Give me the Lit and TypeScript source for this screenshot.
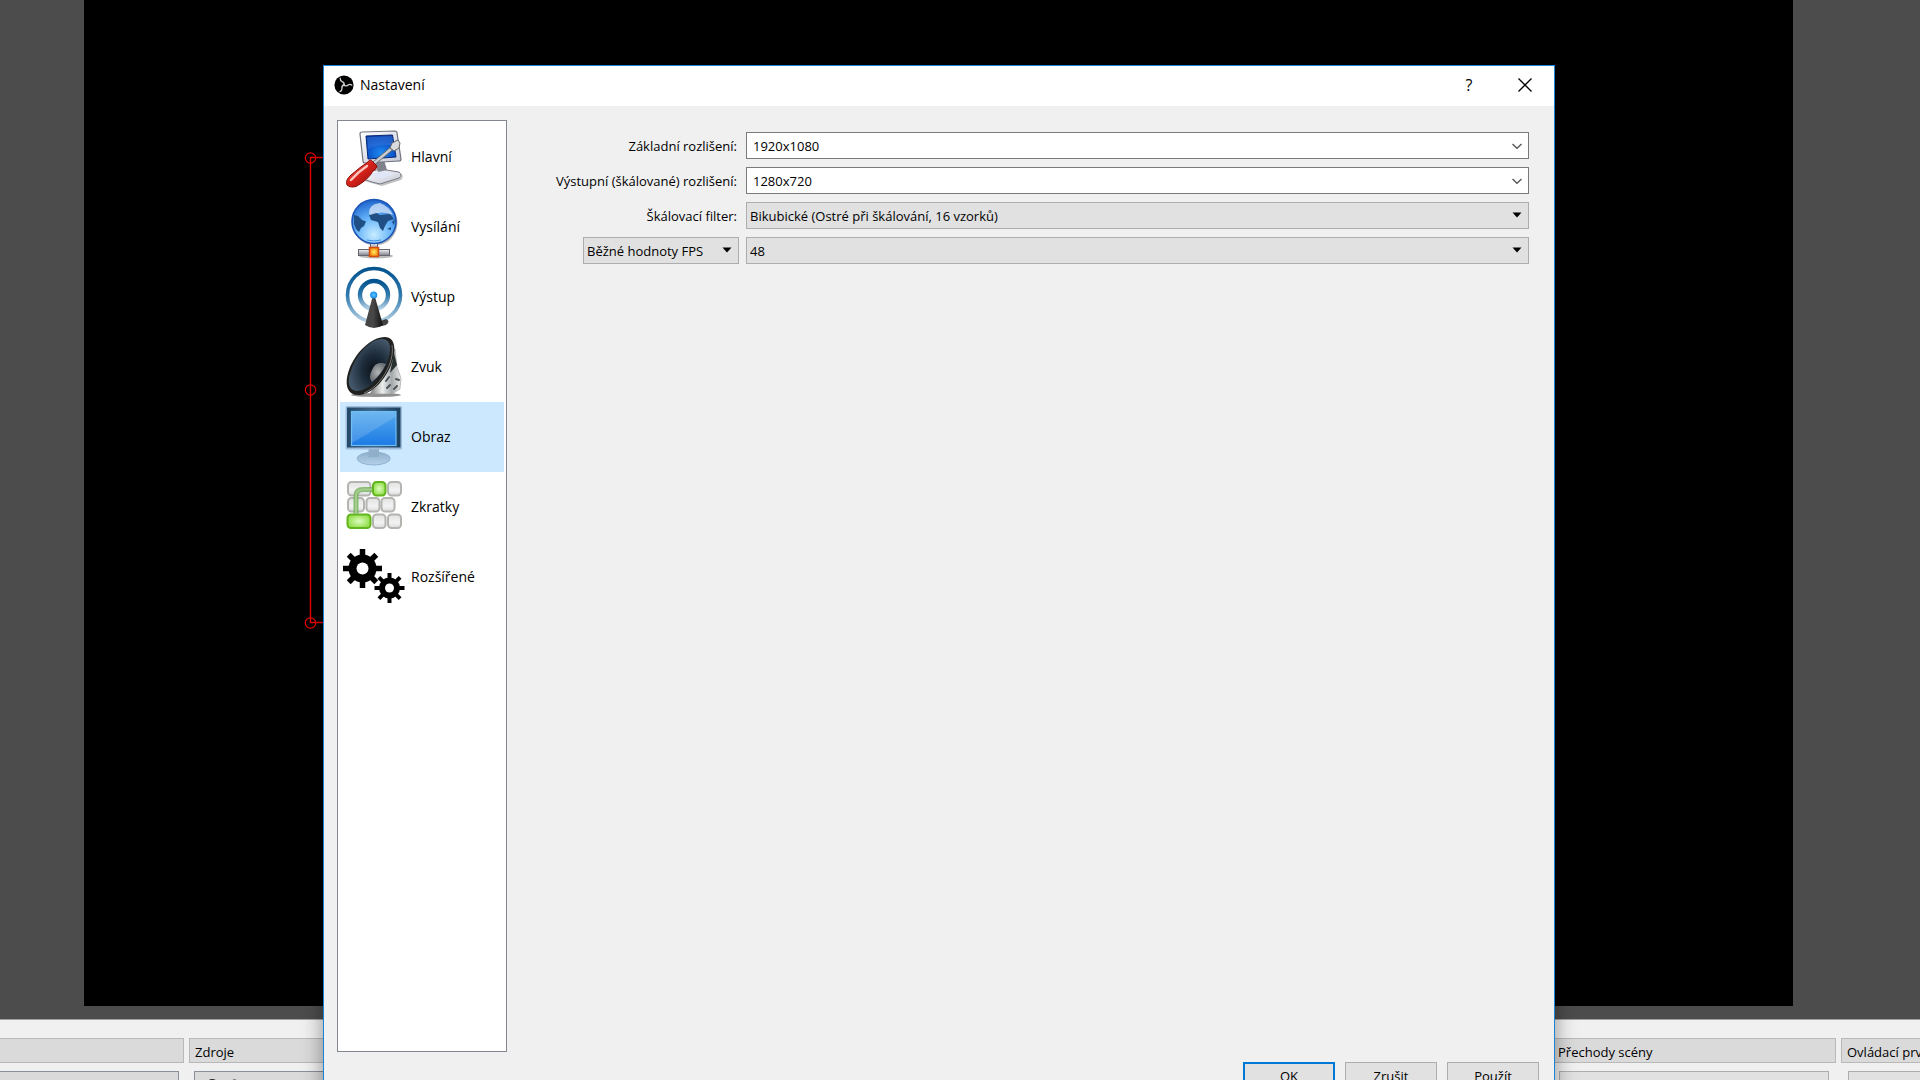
import { LitElement, html, css, svg } from "lit";
import { customElement, property, state } from "lit/decorators.js";
import { classMap } from "lit/directives/class-map.js";

const gear = (cx: number, cy: number, outer: number, body: number, hole: number, tooth: number) => svg`
  <g transform="translate(${cx} ${cy})">
    ${[0, 45, 90, 135].map(
      (a) => svg`<rect x=${-tooth / 2} y=${-outer} width=${tooth} height=${outer * 2} transform="rotate(${a})"></rect>`
    )}
    <circle r=${body}></circle>
    <circle r=${hole} fill="#fff"></circle>
  </g>`;

const key = (x: number, y: number, w: number, green = false) => svg`
  <rect x=${x} y=${y} width=${w} height="13.5" rx="3.5" stroke-width="2"
    fill=${green ? "url(#keyGreen)" : "url(#keyGrey)"} stroke=${green ? "#62b51c" : "#b4b4b0"}></rect>`;

const ICONS: Record<string, unknown> = {
  general: svg`
    <defs>
      <radialGradient id="scr" cx=".5" cy=".75" r=".8"><stop offset="0" stop-color="#1f8cf0"/><stop offset=".6" stop-color="#0a50c8"/><stop offset="1" stop-color="#06329a"/></radialGradient>
      <linearGradient id="shell" x1="0" y1="0" x2="1" y2="1"><stop offset="0" stop-color="#fff"/><stop offset="1" stop-color="#c4c6d4"/></linearGradient>
      <linearGradient id="grip" x1="0" y1="0" x2="1" y2="1"><stop offset="0" stop-color="#f88"/><stop offset=".45" stop-color="#d8241c"/><stop offset="1" stop-color="#8e0c08"/></linearGradient>
    </defs>
    <path d="M24 50 L40 45 L58 48 Q63 51 59 55 L40 61 L22 56 Z" fill="#999" opacity=".6"/>
    <path d="M23 48 L38 44 L57 47 Q61 50 57 53 L38 59 Q28 57 22 54 Z" fill="url(#shell)" stroke="#777a86"/>
    <path d="M28 50 L39 46 L53 49 L38 54 Z" fill="#dfe6f8"/>
    <path d="M33 36 L42 35 L45 45 L36 47 Z" fill="#80828c"/>
    <path d="M20 7 L53 6 Q55 6 55 8 L59 34 Q59 36 57 36 L23 38 Q21 38 21 36 L18 9 Q18 7 20 7 Z" fill="url(#shell)" stroke="#70737e" stroke-width="1.2"/>
    <path d="M24 11 L50.500 10 L54 32 L26 34 Z" fill="url(#scr)" stroke="#0a2a78"/>
    <path d="M25 12 L50 11 L52 21 Q38 18 26 24 Z" fill="#3a7ce0" opacity=".5"/>
    <path d="M31 39 L49 24" stroke="#666" stroke-width="4"/>
    <path d="M31 39 L49 24" stroke="#c8ccd4" stroke-width="2.4"/>
    <path d="M48 23 L50 18 L56 15 L58 18 L57 23 L52 26 Z" fill="#d8dade" stroke="#666"/>
    <path d="M26 37 Q28 33 31 37 L35 41 Q35 44 31 46 Q26 55 14 61.500 Q8 63 5 60 Q3 55 9 50 Q18 42 26 37 Z" fill="url(#grip)" stroke="#8c100c"/>
    <path d="M9 55 Q16 47 25 41" stroke="#ffc4bc" stroke-width="2.4" fill="none" stroke-linecap="round"/>`,
  stream: svg`
    <defs>
      <radialGradient id="sea" cx=".5" cy=".8" r=".8"><stop offset="0" stop-color="#c6ecff"/><stop offset=".5" stop-color="#66b4fa"/><stop offset="1" stop-color="#1c62cc"/></radialGradient>
      <linearGradient id="pipe" x1="0" y1="0" x2="0" y2="1"><stop offset="0" stop-color="#f4f4f8"/><stop offset="1" stop-color="#7c7e88"/></linearGradient>
      <radialGradient id="node"><stop offset="0" stop-color="#ffee60"/><stop offset="1" stop-color="#f8880c"/></radialGradient>
    </defs>
    <ellipse cx="34" cy="61" rx="17" ry="2.5" fill="#777" opacity=".5"/>
    <circle cx="33" cy="28" r="22.5" fill="#888" opacity=".6"/>
    <rect x="28.500" y="48" width="7" height="7" fill="url(#pipe)" stroke="#666"/>
    <rect x="16.500" y="54.500" width="31" height="6" fill="url(#pipe)" stroke="#66676e"/>
    <rect x="27.500" y="52.500" width="9" height="9" fill="url(#node)" stroke="#d44c0c" stroke-width="1.500"/>
    <circle cx="32" cy="26.500" r="22" fill="url(#sea)" stroke="#1c54b4" stroke-width="1.600"/>
    <path d="M12 20 L16 21 L20 25 L24 26.500 L22 31 L19 33 L17 37 L14 34 L12 29 Z M27 20 L33 17 L38 20 L48 19 L52 24 L46 26 L43 31 L41 36 L38 33 L36 27 L29 25 Z M50 27 L53 24 L52 30 Z M45 34 L49 32 L49 35 Z" fill="#1f4f84"/>
    <path d="M27 18 Q27 9 38 8 Q48 12 51 20 Q40 15 28 20 Z" fill="#d8e8fa" opacity=".75"/>
    <path d="M25 45 Q32 47 39 45" stroke="#3f92e4" fill="none"/>`,
  output: svg`
    <defs>
      <linearGradient id="ring" x1="0" y1="0" x2="0" y2="1"><stop offset="0" stop-color="#045490"/><stop offset=".5" stop-color="#2f78ac"/><stop offset="1" stop-color="#b4d0e4"/></linearGradient>
      <linearGradient id="cone"><stop offset="0" stop-color="#444"/><stop offset=".45" stop-color="#484848"/><stop offset="1" stop-color="#101010"/></linearGradient>
      <radialGradient id="bulb"><stop offset="0" stop-color="#5cc8ff"/><stop offset="1" stop-color="#1488ec"/></radialGradient>
    </defs>
    <circle cx="32" cy="30" r="26.500" fill="none" stroke="url(#ring)" stroke-width="3.600"/>
    <circle cx="32" cy="30" r="14" fill="none" stroke="url(#ring)" stroke-width="4.400"/>
    <path d="M36 57 L44 54 Q49 56 44 60 L36 62 Z" fill="#222" opacity=".85"/>
    <path d="M30.500 32 L33 32 L41 60 Q32 66 23 60 Z" fill="url(#cone)"/>
    <circle cx="31.700" cy="30" r="3.600" fill="url(#bulb)"/>`,
  audio: svg`
    <defs>
      <radialGradient id="bowl" cx=".62" cy=".6" r=".7"><stop offset="0" stop-color="#0a1018"/><stop offset=".4" stop-color="#1c2a38"/><stop offset="1" stop-color="#4c6074"/></radialGradient>
      <radialGradient id="hub"><stop offset="0" stop-color="#b4b4b4"/><stop offset="1" stop-color="#70747a"/></radialGradient>
      <linearGradient id="metal"><stop offset="0" stop-color="#777"/><stop offset=".4" stop-color="#eceeee"/><stop offset=".7" stop-color="#a4a8aa"/><stop offset="1" stop-color="#e8e8e8"/></linearGradient>
    </defs>
    <ellipse cx="34" cy="60" rx="25" ry="2" fill="#444" opacity=".6"/>
    <path d="M53 14 L55 32 L59 43 L58 54 L50 59 L28 59 Z" fill="url(#metal)" stroke="#999" stroke-width=".6"/>
    <path d="M52 18 L55 30 L48 38 Z" fill="#26302e"/>
    <path d="M44 46 L47 42 M45 53 L48 50 M52 54 L55 51 M54 44 L57 45" stroke="#4c5456" stroke-width="2" stroke-linecap="round"/>
    <path d="M43 2 C54 2 54 17 50 27 C45 43 31 59 17 60 C3 60 3 46 7 35 C13 18 29 2 43 2 Z" fill="#20211f"/>
    <path d="M50 10 C53 28 38 52 22 58" stroke="#777" fill="none" stroke-width="1"/>
    <path d="M40 4 C50 4 49 16 46 25 C41 40 29 54 16 56 C6 56 5 46 9 36 C14 20 28 4 40 4 Z" fill="url(#bowl)"/>
    <path d="M30 35 Q33 27 40 28 L44 29 Q39 40 30 47 Q26 42 30 35 Z" fill="url(#hub)"/>`,
  video: svg`
    <defs>
      <linearGradient id="glass" x1="0" y1="0" x2="0" y2="1"><stop offset="0" stop-color="#54aaee"/><stop offset="1" stop-color="#1c7ae4"/></linearGradient>
      <linearGradient id="frame"><stop offset="0" stop-color="#23486a"/><stop offset=".5" stop-color="#3c6484"/><stop offset="1" stop-color="#1c4060"/></linearGradient>
      <linearGradient id="foot" x1="0" y1="0" x2="0" y2="1"><stop offset="0" stop-color="#8eb0cc"/><stop offset="1" stop-color="#b4d0ea"/></linearGradient>
    </defs>
    <ellipse cx="31.700" cy="53.500" rx="16.500" ry="6.500" fill="url(#foot)" stroke="#84a8c6" stroke-width=".8"/>
    <rect x="26.500" y="43" width="10.500" height="9" fill="#8eaeca"/>
    <rect x="3.500" y="1" width="56.500" height="43.500" rx="1.500" fill="#a0bedc"/>
    <rect x="5" y="2.500" width="53.500" height="40" fill="url(#frame)"/>
    <rect x="9.500" y="6.500" width="44.500" height="34" fill="url(#glass)" stroke="#70bcf4" stroke-width="1.200"/>
    <path d="M10 7 H53.500 V12 L10 38 Z" fill="#fff" opacity=".15"/>`,
  hotkeys: svg`
    <defs>
      <linearGradient id="keyGrey" x1="0" y1="0" x2="0" y2="1"><stop offset="0" stop-color="#e2e2e2"/><stop offset=".6" stop-color="#f2f2f2"/><stop offset="1" stop-color="#dcdcdc"/></linearGradient>
      <radialGradient id="keyGreen"><stop offset="0" stop-color="#dcfcc0"/><stop offset="1" stop-color="#96e050"/></radialGradient>
    </defs>
    ${key(6, 7, 22.5)}${key(31, 7, 12.5, true)}${key(46, 7, 13)}
    ${key(6, 23, 16)}${key(24.5, 23, 13)}${key(39.5, 23, 13)}
    ${key(5.5, 39.5, 23, true)}${key(31, 39.5, 12.5)}${key(46, 39.5, 13)}
    <path d="M14 39 V21 Q14 14.500 21 14.500 H30" fill="none" stroke="#72b05a" stroke-width="5" opacity=".8"/>
    <path d="M14 39 V21 Q14 14.500 21 14.500 H30" fill="none" stroke="#a4cc8c" stroke-width="2"/>`,
  advanced: svg`${gear(20.5, 23.5, 19.5, 14, 6, 5.5)}${gear(47.5, 43, 15, 10.5, 4.5, 4)}`,
};

interface Option {
  id: string;
  label: string;
}

/** Drop-down in either the editable (white) or the plain (grey) native look. */
@customElement("combo-box")
export class ComboBox extends LitElement {
  @property() label = "";
  @property() value = "";
  @property({ type: Boolean }) editable = false;

  static styles = css`
    :host {
      display: block;
    }
    .box {
      display: grid;
      position: relative;
    }
    select {
      appearance: none;
      box-sizing: border-box;
      width: 100%;
      height: 27px;
      margin: 0;
      padding: 1px 24px 0 3px;
      border: 1px solid #adadad;
      border-radius: 0;
      background: #e1e1e1;
      color: #000;
      font: 13px "Open Sans", "Noto Sans", sans-serif;
    }
    select.editable {
      padding-left: 6px;
      border-color: #7a7a7a;
      background: #fff;
    }
    svg {
      position: absolute;
      right: 7px;
      top: 8px;
      width: 10px;
      height: 10px;
      pointer-events: none;
    }
  `;

  render() {
    return html`<div class="box">
      <select aria-label=${this.label} class=${classMap({ editable: this.editable })}>
        <option selected>${this.value}</option>
      </select>
      <svg viewBox="0 0 10 10" aria-hidden="true">
        ${this.editable
          ? svg`<path d="M.5 4 L5 8.300 L9.500 4" fill="none" stroke="#555" stroke-width="1.300"/>`
          : svg`<path d="M.5 2.500 H9.500 L5 7.500 Z"/>`}
      </svg>
    </div>`;
  }
}

@customElement("app-root")
export class AppRoot extends LitElement {
  @state() private page = "video";

  private pages: Option[] = [
    { id: "general", label: "Hlavní" },
    { id: "stream", label: "Vysílání" },
    { id: "output", label: "Výstup" },
    { id: "audio", label: "Zvuk" },
    { id: "video", label: "Obraz" },
    { id: "hotkeys", label: "Zkratky" },
    { id: "advanced", label: "Rozšířené" },
  ];

  static styles = css`
    :host {
      display: flex;
      flex-direction: column;
      position: relative;
      height: 100vh;
      overflow: hidden;
      background: #f0f0f0;
      color: #000;
      font: 13px/18px "Open Sans", "Noto Sans", sans-serif;
    }
    .preview {
      flex: 1;
      display: flex;
      padding: 0 127px 13px 84px;
      background: #4c4c4c;
      border-bottom: 1px solid #a0a0a0;
    }
    .canvas {
      flex: 1;
      background: #000;
    }
    .selection {
      position: absolute;
      left: 303px;
      top: 150px;
      width: 20px;
      height: 480px;
      fill: none;
      stroke: #f00000;
    }
    .docks {
      display: grid;
      grid-template-columns: 184px 1fr 284px 100px;
      column-gap: 5px;
      height: 42px;
      margin-right: -21px;
      padding-top: 18px;
    }
    .dock {
      display: flex;
      flex-direction: column;
      gap: 8px;
      min-width: 0;
    }
    .dock h2 {
      box-sizing: border-box;
      height: 25px;
      margin: 0;
      padding: 4px 5px 0;
      border: 1px solid #b8b8b8;
      background: #dadada;
      font: inherit;
      white-space: nowrap;
    }
    .panel {
      box-sizing: border-box;
      height: 40px;
      margin: 0 5px;
      padding: 6px 11px;
      border: 1px solid #8a9098;
      background: #dadada;
    }
    .first .panel {
      margin-left: 0;
      border-left: 0;
    }
    .first h2 {
      border-left: 0;
    }
    .panel.control {
      margin: 0 7px;
      border-color: #adadad;
      background: #e1e1e1;
    }
    .panel svg {
      display: block;
      width: 36px;
      height: 16px;
    }
    .dialog {
      box-sizing: border-box;
      display: flex;
      flex-direction: column;
      position: absolute;
      inset: 65px 365px -24px 323px;
      border: 1px solid #1883d7;
      background: #f0f0f0;
      box-shadow: 0 0 20px rgba(0, 0, 0, 0.4);
    }
    .titlebar {
      display: flex;
      align-items: center;
      height: 38px;
      padding: 0 1px 2px 10px;
      background: #fff;
    }
    .titlebar h1 {
      flex: 1;
      margin: 0 0 0 6px;
      font: 14px/20px "Open Sans", "Noto Sans", sans-serif;
    }
    .logo {
      width: 20px;
      height: 20px;
    }
    .titlebar button {
      display: grid;
      place-items: center;
      width: 56px;
      height: 38px;
      padding: 0;
      border: 0;
      background: none;
      color: #000;
      font: 500 16px "Open Sans", "Noto Sans", sans-serif;
    }
    .titlebar button svg {
      width: 14px;
      height: 14px;
    }
    .body {
      flex: 1;
      display: flex;
      gap: 49px;
      padding: 14px 25px 0 13px;
    }
    .nav {
      box-sizing: border-box;
      width: 170px;
      padding: 1px 2px;
      border: 1px solid #828790;
      background: #fff;
    }
    .nav button {
      display: flex;
      align-items: center;
      gap: 5px;
      width: 100%;
      height: 70px;
      padding: 0 2px;
      border: 0;
      background: none;
      color: #000;
      font: 14px/20px "Open Sans", "Noto Sans", sans-serif;
      text-align: left;
    }
    .nav button.active {
      background: #cce8ff;
    }
    .nav svg {
      width: 64px;
      height: 64px;
    }
    .form {
      flex: 1;
      display: grid;
      grid-template-columns: 183px 1fr;
      grid-auto-rows: 27px;
      align-content: start;
      align-items: center;
      gap: 8px 7px;
      padding-top: 12px;
    }
    .label {
      padding: 1px 2px 0 0;
      text-align: right;
      white-space: nowrap;
    }
    .fps {
      margin-left: 27px;
    }
    .actions {
      display: flex;
      justify-content: flex-end;
      gap: 10px;
      padding: 10px 15px 14px;
    }
    .actions button {
      width: 92px;
      height: 27px;
      padding: 0;
      border: 1px solid #adadad;
      background: #e1e1e1;
      color: #000;
      font: inherit;
    }
    .actions button.primary {
      border: 2px solid #0078d7;
    }
  `;

  render() {
    return html`
      <main class="preview"><div class="canvas"></div></main>
      <svg class="selection" viewBox="0 0 20 480" aria-hidden="true">
        <path d="M20 7.500 H7.500 V472.500 H20" stroke-width="1.400"></path>
        ${[8, 240, 473].map((y) => svg`<circle cx="7.500" cy=${y} r="5.200" stroke-width="1.200"></circle>`)}
      </svg>

      <footer class="docks">
        <section class="dock first"><h2></h2><div class="panel"></div></section>
        <section class="dock">
          <h2>Zdroje</h2>
          <div class="panel">
            <svg viewBox="0 0 36 16" aria-hidden="true">
              <path d="M0 6 Q6 -2 13 6 Q6 13 0 6 Z" fill="none" stroke="#222" stroke-width="2"></path>
              <circle cx="6.500" cy="6" r="2.500"></circle>
              <path d="M25 8 V4 Q28.500 -2 32 4 V8 Z" fill="#777"></path>
            </svg>
          </div>
        </section>
        <section class="dock"><h2>Přechody scény</h2><div class="panel control"></div></section>
        <section class="dock"><h2>Ovládací prvky</h2><div class="panel control"></div></section>
      </footer>

      <div class="dialog" role="dialog" aria-labelledby="title">
        <header class="titlebar">
          <svg class="logo" viewBox="0 0 20 20" aria-hidden="true">
            <circle cx="10" cy="10" r="9.600"></circle>
            ${[0, 120, 240].map(
              (a) => svg`<path d="M10 10.500 Q10.800 7.600 8.200 6.600 Q6 5.600 6.200 3.200"
                fill="none" stroke="#d0d0d0" stroke-width="1.300" stroke-linecap="round" transform="rotate(${a} 10 10)"></path>`
            )}
          </svg>
          <h1 id="title">Nastavení</h1>
          <button aria-label="Nápověda">?</button>
          <button aria-label="Zavřít">
            <svg viewBox="0 0 14 14"><path d="M.5 .5 L13.500 13.500 M13.500 .5 L.5 13.500" stroke="#000" stroke-width="1.300"></path></svg>
          </button>
        </header>

        <div class="body">
          <nav class="nav">
            ${this.pages.map(
              (p) => html`<button
                class=${classMap({ active: p.id === this.page })}
                @click=${() => (this.page = p.id)}
              >
                <svg viewBox="0 0 64 64" aria-hidden="true">${ICONS[p.id]}</svg>
                <span>${p.label}</span>
              </button>`
            )}
          </nav>

          <div class="form">
            <span class="label">Základní rozlišení:</span>
            <combo-box editable label="Základní rozlišení" value="1920x1080"></combo-box>
            <span class="label">Výstupní (škálované) rozlišení:</span>
            <combo-box editable label="Výstupní (škálované) rozlišení" value="1280x720"></combo-box>
            <span class="label">Škálovací filter:</span>
            <combo-box label="Škálovací filter" value="Bikubické (Ostré při škálování, 16 vzorků)"></combo-box>
            <combo-box class="fps" label="Typ FPS" value="Běžné hodnoty FPS"></combo-box>
            <combo-box label="Běžné hodnoty FPS" value="48"></combo-box>
          </div>
        </div>

        <div class="actions">
          <button class="primary">OK</button>
          <button>Zrušit</button>
          <button>Použít</button>
        </div>
      </div>
    `;
  }
}
